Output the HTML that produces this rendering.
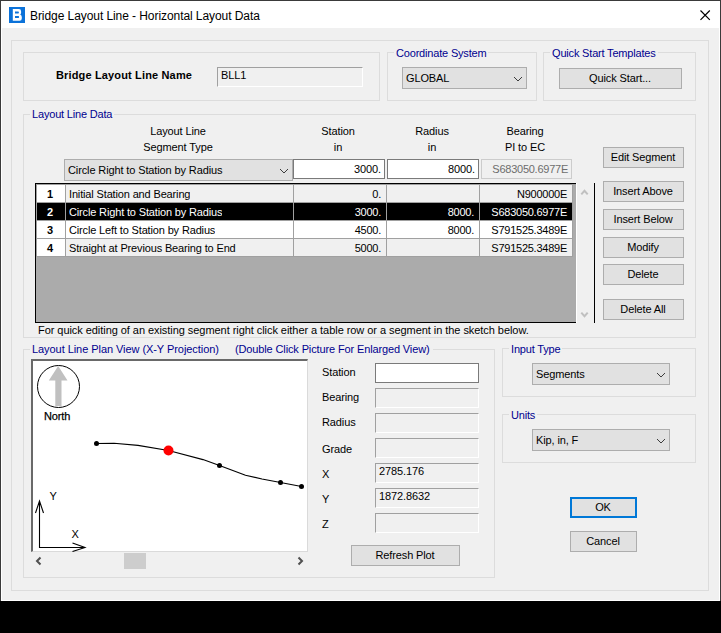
<!DOCTYPE html>
<html><head><meta charset="utf-8">
<style>
*{box-sizing:border-box}
html,body{margin:0;padding:0;width:721px;height:633px;background:#000;overflow:hidden}
body{font-family:"Liberation Sans",sans-serif;font-size:11px;color:#000;position:relative;letter-spacing:-0.12px}
.a{position:absolute}
#win{position:absolute;left:0;top:0;width:721px;height:601px;background:#f0f0f0;border-left:1px solid #3a3a3a;border-top:1px solid #3a3a3a;border-right:1px solid #3a3a3a}
#hl{position:absolute;left:1px;top:1px;width:719px;height:600px;border-left:1px solid #fff;border-right:1px solid #fff;border-bottom:1px solid #fff}
#title{position:absolute;left:1px;top:1px;width:719px;height:27px;background:#fff}
.t{position:absolute;white-space:nowrap;line-height:13px;font-size:11px}
.gb{position:absolute;border:1px solid #dcdcdc}
.gl{position:absolute;white-space:nowrap;line-height:13px;color:#00008f;background:#f0f0f0;padding:0 2px;letter-spacing:-0.18px}
.btn{position:absolute;background:#e1e1e1;border:1px solid #adadad;text-align:center;line-height:19px;white-space:nowrap;letter-spacing:-0.12px;padding-right:1px}
.cmb{position:absolute;background:#e1e1e1;border:1px solid #adadad;white-space:nowrap;line-height:19px;padding-left:3px;padding-top:1px}
.chev{position:absolute;width:10px;height:6px}
.tb{position:absolute;border:1px solid #7a7a7a;background:#fff;white-space:nowrap}
.tbd{position:absolute;border-top:1px solid #a0a0a0;border-left:1px solid #a0a0a0;border-right:1px solid #fff;border-bottom:1px solid #fff;background:#f0f0f0;white-space:nowrap}
.row{position:absolute;left:37px;width:536px;height:18px}
.c{position:absolute;top:0;height:17px;line-height:19px;white-space:nowrap;overflow:hidden}
.vl{position:absolute;width:1px;background:#a0a0a0}
.hl{position:absolute;height:1px;background:#a0a0a0}
</style></head><body>
<div id="win"></div>
<div id="hl"></div>
<div id="title"></div>
<!-- title icon -->
<div class="a" style="left:9px;top:7px;width:16px;height:16px;background:#0b72d9"></div>
<svg class="a" style="left:9px;top:7px" width="16" height="16" viewBox="0 0 16 16"><path fill-rule="evenodd" fill="#fff" d="M3.8 2.1H10Q12.1 2.1 12.1 4.4V5.8Q12.1 7.1 11.2 7.6Q12.8 8.1 12.8 10.1V11.6Q12.8 13.8 10.6 13.8H3.8ZM6 4.5H9.2Q9.9 4.5 9.9 5.5Q9.9 6.6 9.2 6.6H6ZM6 9.1H9.4Q10.1 9.1 10.1 10Q10.1 11 9.4 11H6Z"/></svg>
<div class="t" style="left:30px;top:9px;font-size:12px;line-height:15px;letter-spacing:-0.07px">Bridge Layout Line - Horizontal Layout Data</div>
<svg class="a" style="left:699px;top:9px" width="13" height="13" viewBox="0 0 13 13"><path d="M1.5 1.5L10.8 10.8M10.8 1.5L1.5 10.8" stroke="#000" stroke-width="1.2"/></svg>

<!-- outer groupbox -->
<div class="gb" style="left:11px;top:40px;width:698px;height:551px"></div>

<!-- name group -->
<div class="gb" style="left:23px;top:52px;width:357px;height:49px"></div>
<div class="t" style="left:56px;top:69px;font-weight:bold;letter-spacing:0.15px">Bridge Layout Line Name</div>
<div class="tbd" style="left:217px;top:67px;width:146px;height:20px;padding-left:3px;line-height:15px">BLL1</div>

<!-- coord system -->
<div class="gb" style="left:387px;top:52px;width:150px;height:49px"></div>
<div class="gl" style="left:394px;top:47px">Coordinate System</div>
<div class="cmb" style="left:402px;top:67px;width:125px;height:22px">GLOBAL</div>

<!-- quick start -->
<div class="gb" style="left:543px;top:52px;width:153px;height:49px"></div>
<div class="gl" style="left:550px;top:47px">Quick Start Templates</div>
<div class="btn" style="left:559px;top:68px;width:123px;height:21px">Quick Start...</div>

<!-- layout line data -->
<div class="gb" style="left:23px;top:114px;width:673px;height:224px"></div>
<div class="gl" style="left:30px;top:108px">Layout Line Data</div>
<div class="t" style="left:128px;top:123px;width:100px;text-align:center;line-height:16px">Layout Line<br>Segment Type</div>
<div class="t" style="left:288px;top:123px;width:100px;text-align:center;line-height:16px">Station<br>in</div>
<div class="t" style="left:382px;top:123px;width:100px;text-align:center;line-height:16px">Radius<br>in</div>
<div class="t" style="left:475px;top:123px;width:100px;text-align:center;line-height:16px">Bearing<br>PI to EC</div>

<div class="cmb" style="left:64px;top:159px;width:229px;height:22px">Circle Right to Station by Radius</div>
<div class="tb" style="left:293px;top:159px;width:92px;height:20px;text-align:right;padding-right:3px;line-height:18px">3000.</div>
<div class="tb" style="left:387px;top:159px;width:92px;height:20px;text-align:right;padding-right:3px;line-height:18px">8000.</div>
<div class="tb" style="left:481px;top:159px;width:91px;height:20px;text-align:right;padding-right:3px;line-height:18px;border-color:#cccccc;background:#f0f0f0;color:#6d6d6d;letter-spacing:-0.25px">S683050.6977E</div>

<!-- grid -->
<div class="a" style="left:36px;top:184px;width:540px;height:138px;background:#ababab"></div>
<div class="a" style="left:35px;top:183px;width:541px;height:1px;background:#000"></div>
<div class="a" style="left:35px;top:183px;width:1px;height:140px;background:#000"></div>
<div class="a" style="left:35px;top:322px;width:541px;height:1px;background:#000"></div>
<div class="a" style="left:576px;top:183px;width:1px;height:140px;background:#fff"></div>
<div class="a" style="left:36px;top:184px;width:540px;height:1px;background:#a0a0a0"></div>
<div class="a" style="left:594px;top:183px;width:1px;height:140px;background:#000"></div>

<div class="row" style="top:185px;background:#f0f0f0"><div class="c" style="left:0;width:28px;padding-right:2px;background:#fff;text-align:center;font-weight:bold">1</div><div class="c" style="left:32px;letter-spacing:-0.15px">Initial Station and Bearing</div><div class="c" style="left:257px;width:92px;text-align:right;padding-right:5px;letter-spacing:-0.25px">0.</div><div class="c" style="left:350px;width:92px"></div><div class="c" style="left:443px;width:92px;text-align:right;padding-right:5px;letter-spacing:-0.25px">N900000E</div></div>
<div class="row" style="top:203px;background:#000;color:#fff"><div class="c" style="left:0;width:28px;padding-right:2px;text-align:center;font-weight:bold">2</div><div class="c" style="left:32px;letter-spacing:-0.15px">Circle Right to Station by Radius</div><div class="c" style="left:257px;width:92px;text-align:right;padding-right:5px;letter-spacing:-0.25px">3000.</div><div class="c" style="left:350px;width:92px;text-align:right;padding-right:5px;letter-spacing:-0.25px">8000.</div><div class="c" style="left:443px;width:92px;text-align:right;padding-right:5px;letter-spacing:-0.25px">S683050.6977E</div></div>
<div class="row" style="top:221px;background:#fff"><div class="c" style="left:0;width:28px;padding-right:2px;text-align:center;font-weight:bold">3</div><div class="c" style="left:32px;letter-spacing:-0.15px">Circle Left to Station by Radius</div><div class="c" style="left:257px;width:92px;text-align:right;padding-right:5px;letter-spacing:-0.25px">4500.</div><div class="c" style="left:350px;width:92px;text-align:right;padding-right:5px;letter-spacing:-0.25px">8000.</div><div class="c" style="left:443px;width:92px;text-align:right;padding-right:5px;letter-spacing:-0.25px">S791525.3489E</div></div>
<div class="row" style="top:239px;background:#f0f0f0"><div class="c" style="left:0;width:28px;padding-right:2px;background:#fff;text-align:center;font-weight:bold">4</div><div class="c" style="left:32px;letter-spacing:-0.15px">Straight at Previous Bearing to End</div><div class="c" style="left:257px;width:92px;text-align:right;padding-right:5px;letter-spacing:-0.25px">5000.</div><div class="c" style="left:350px;width:92px"></div><div class="c" style="left:443px;width:92px;text-align:right;padding-right:5px;letter-spacing:-0.25px">S791525.3489E</div></div>
<!-- grid lines -->
<div class="hl" style="left:37px;top:202px;width:536px"></div>
<div class="hl" style="left:37px;top:220px;width:536px"></div>
<div class="hl" style="left:37px;top:238px;width:536px"></div>
<div class="hl" style="left:37px;top:256px;width:536px"></div>
<div class="vl" style="left:36px;top:184px;height:73px"></div>
<div class="vl" style="left:65px;top:185px;height:72px"></div>
<div class="vl" style="left:293px;top:185px;height:72px"></div>
<div class="vl" style="left:386px;top:185px;height:72px"></div>
<div class="vl" style="left:479px;top:185px;height:72px"></div>
<div class="vl" style="left:572px;top:185px;height:72px"></div>
<!-- scroll chevrons -->
<svg class="a" style="left:580px;top:188px" width="10" height="8" viewBox="0 0 10 8"><path d="M1.3 6.3L4.5 2.8L7.7 6.3" fill="none" stroke="#c0c0c0" stroke-width="2"/></svg>
<svg class="a" style="left:580px;top:311px" width="10" height="8" viewBox="0 0 10 8"><path d="M1.3 1.7L4.5 5.2L7.7 1.7" fill="none" stroke="#c0c0c0" stroke-width="2"/></svg>

<div class="btn" style="left:603px;top:147px;width:81px;height:21px">Edit Segment</div>
<div class="btn" style="left:603px;top:181px;width:81px;height:21px">Insert Above</div>
<div class="btn" style="left:603px;top:209px;width:81px;height:21px">Insert Below</div>
<div class="btn" style="left:603px;top:237px;width:81px;height:21px">Modify</div>
<div class="btn" style="left:603px;top:264px;width:81px;height:21px">Delete</div>
<div class="btn" style="left:603px;top:299px;width:81px;height:21px">Delete All</div>

<div class="t" style="left:38px;top:324px;letter-spacing:-0.055px">For quick editing of an existing segment right click either a table row or a segment in the sketch below.</div>

<!-- plan view -->
<div class="gb" style="left:23px;top:349px;width:472px;height:229px"></div>
<div class="gl" style="left:30px;top:343px;width:403px;letter-spacing:-0.06px">Layout Line Plan View (X-Y Projection)</div><div class="t" style="left:235px;top:343px;color:#00008f;letter-spacing:-0.13px">(Double Click Picture For Enlarged View)</div>

<div class="a" style="left:31px;top:359px;width:277px;height:193px;background:#fff;border-left:2px solid #696969;border-top:2px solid #696969;border-right:1px solid #dadada;border-bottom:1px solid #dadada"></div>
<svg class="a" style="left:33px;top:361px" width="275" height="191" viewBox="33 361 275 191">
 <circle cx="58.5" cy="386.5" r="21" fill="none" stroke="#000" stroke-width="1"/>
 <path d="M58.2 366L67.5 380.5H61.5V406H55.3V380.5H48.8Z" fill="#c0c0c0"/>
 <text x="44" y="419.5" font-family="Liberation Sans" font-size="11" stroke="#000" stroke-width="0.25">North</text>
 <path d="M96.5 443.5L114 443.3L138 445.4L168.5 450.5L203 459.6L219.5 465.5L245.5 475.2L262 479L280.5 482.5L301.5 486.5" fill="none" stroke="#000" stroke-width="1.1" stroke-linejoin="round"/>
 <circle cx="96.5" cy="443.5" r="2.5" fill="#000"/>
 <circle cx="219.5" cy="465.5" r="2.5" fill="#000"/>
 <circle cx="280.5" cy="482.5" r="2.5" fill="#000"/>
 <circle cx="301.5" cy="486.5" r="2.5" fill="#000"/>
 <circle cx="168.5" cy="450.5" r="5" fill="#ff0000"/>
 <path d="M39.5 501V547.5H85M35.5 513L39.5 501L43.5 513M72.5 543L85 547.5L72.5 551.5" fill="none" stroke="#000" stroke-width="1.1"/>
 <text x="49.5" y="499.5" font-family="Liberation Sans" font-size="11">Y</text>
 <text x="71.5" y="537.5" font-family="Liberation Sans" font-size="11">X</text>
</svg>
<!-- h scrollbar -->
<div class="a" style="left:33px;top:552px;width:275px;height:17px;background:#f0f0f0"></div>
<div class="a" style="left:124px;top:553px;width:22px;height:16px;background:#cdcdcd"></div>
<svg class="a" style="left:35px;top:556px" width="8" height="10" viewBox="0 0 8 10"><path d="M5.5 1.5L2 5L5.5 8.5" fill="none" stroke="#505050" stroke-width="2"/></svg>
<svg class="a" style="left:296px;top:556px" width="8" height="10" viewBox="0 0 8 10"><path d="M2.5 1.5L6 5L2.5 8.5" fill="none" stroke="#505050" stroke-width="2"/></svg>

<div class="t" style="left:322px;top:366px">Station</div>
<div class="tb" style="left:375px;top:363px;width:104px;height:20px"></div>
<div class="t" style="left:322px;top:391px">Bearing</div>
<div class="tbd" style="left:375px;top:388px;width:104px;height:20px"></div>
<div class="t" style="left:322px;top:416px">Radius</div>
<div class="tbd" style="left:375px;top:413px;width:104px;height:20px"></div>
<div class="t" style="left:322px;top:443px">Grade</div>
<div class="tbd" style="left:375px;top:438px;width:104px;height:20px"></div>
<div class="t" style="left:322px;top:468px">X</div>
<div class="tbd" style="left:375px;top:463px;width:104px;height:20px;padding-left:3px;line-height:14px">2785.176</div>
<div class="t" style="left:322px;top:493px">Y</div>
<div class="tbd" style="left:375px;top:488px;width:104px;height:20px;padding-left:3px;line-height:14px">1872.8632</div>
<div class="t" style="left:322px;top:518px">Z</div>
<div class="tbd" style="left:375px;top:513px;width:104px;height:20px"></div>
<div class="btn" style="left:351px;top:545px;width:109px;height:21px">Refresh Plot</div>

<!-- input type -->
<div class="gb" style="left:502px;top:348px;width:194px;height:49px"></div>
<div class="gl" style="left:509px;top:343px">Input Type</div>
<div class="cmb" style="left:532px;top:363px;width:138px;height:22px">Segments</div>
<div class="gb" style="left:502px;top:414px;width:194px;height:49px"></div>
<div class="gl" style="left:509px;top:409px">Units</div>
<div class="cmb" style="left:532px;top:429px;width:138px;height:22px">Kip, in, F</div>

<div class="btn" style="left:570px;top:497px;width:67px;height:21px;border:2px solid #0078d7;line-height:17px">OK</div>
<div class="btn" style="left:570px;top:531px;width:67px;height:21px">Cancel</div>

<!-- combo chevrons -->
<svg class="a chev" style="left:513px;top:76px" viewBox="0 0 10 6"><path d="M1 1L5 5L9 1" fill="none" stroke="#3c3c3c" stroke-width="1"/></svg>
<svg class="a chev" style="left:279px;top:168px" viewBox="0 0 10 6"><path d="M1 1L5 5L9 1" fill="none" stroke="#3c3c3c" stroke-width="1"/></svg>
<svg class="a chev" style="left:656px;top:372px" viewBox="0 0 10 6"><path d="M1 1L5 5L9 1" fill="none" stroke="#3c3c3c" stroke-width="1"/></svg>
<svg class="a chev" style="left:656px;top:438px" viewBox="0 0 10 6"><path d="M1 1L5 5L9 1" fill="none" stroke="#3c3c3c" stroke-width="1"/></svg>
</body></html>
